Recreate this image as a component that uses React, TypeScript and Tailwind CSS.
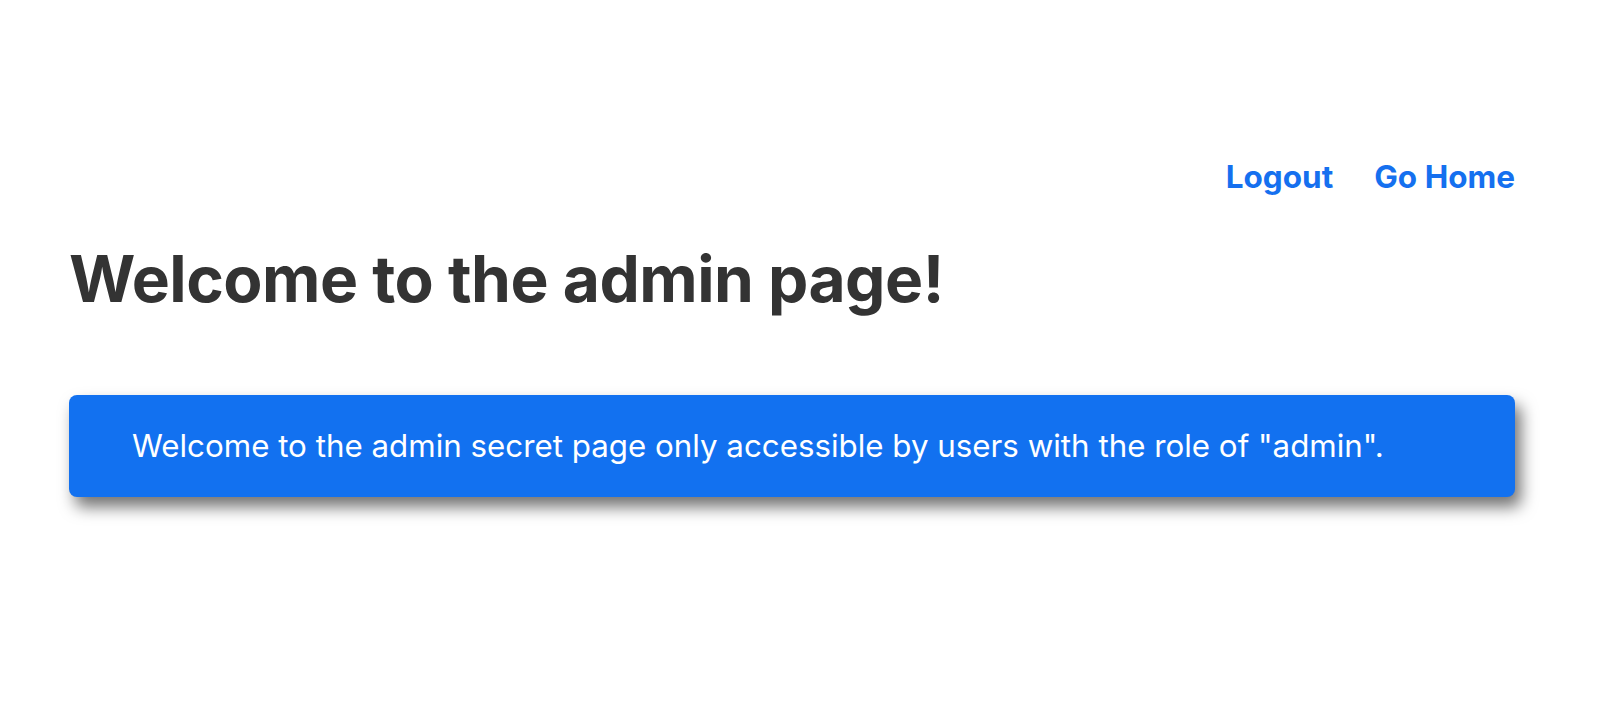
export default function App() {
  return (
    <div className="min-h-[708px] bg-white pl-[69px] pr-[85px] pt-[153px] font-['Inter',sans-serif]">
      <nav className="flex justify-end gap-[41px]">
        <a href="#" className="text-[31.5px] font-bold text-[#1570ef]">Logout</a>
        <a href="#" className="text-[31.5px] font-bold text-[#1570ef]">Go Home</a>
      </nav>
      <h1 className="mt-[47px] text-[64px] font-bold leading-none tracking-[-0.5px] text-[#333333]">
        Welcome to the admin page!
      </h1>
      <div className="mt-[84px] flex h-[102px] items-center rounded-lg bg-[#1271f0] pl-[63px] shadow-[6px_10px_16px_rgba(0,0,0,0.55)]">
        <p className="text-[31.3px] text-white">
          Welcome to the admin secret page only accessible by users with the role of "admin".
        </p>
      </div>
    </div>
  );
}
